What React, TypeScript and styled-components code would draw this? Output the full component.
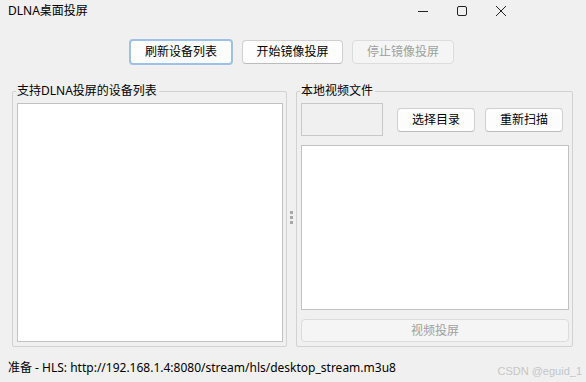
import React from 'react';
import styled, { createGlobalStyle } from 'styled-components';

const FONT = `"Noto Sans", "Noto Sans CJK SC", sans-serif`;

const GlobalStyle = createGlobalStyle`
    html, body {
        margin: 0;
        padding: 0;
        background: #f0f0f0;
    }
    * {
        box-sizing: border-box;
    }
`;

const Window = styled.div`
    width: 586px;
    height: 382px;
    display: flex;
    flex-direction: column;
    background: #f0f0f0;
    font-family: ${FONT};
    font-size: 12px;
    color: #000;
    position: relative;
    overflow: hidden;
`;

const TitleBar = styled.div`
    height: 21px;
    display: flex;
    align-items: center;
    padding-left: 8px;
`;

const Title = styled.div`
    flex: 1;
    line-height: 14px;
`;

const Controls = styled.div`
    display: flex;
    margin-right: 66px;
    height: 21px;
`;

const ControlButton = styled.div`
    width: 39px;
    height: 21px;
    display: flex;
    align-items: center;
    justify-content: center;
`;

const Toolbar = styled.div`
    display: flex;
    gap: 9px;
    padding-top: 18px;
    padding-left: 129px;
`;

const Button = styled.button<{ $focused?: boolean; $width?: number }>`
    font-family: ${FONT};
    font-size: 12px;
    height: ${(p) => (p.$focused ? 26 : 24)}px;
    width: ${(p) => p.$width ?? 100}px;
    margin: ${(p) => (p.$focused ? '0' : '1px 0')};
    padding: 0;
    border-radius: 4px;
    background: #fdfdfd;
    color: #000;
    border: ${(p) => (p.$focused ? '2px solid #9cc2ea' : '1px solid #d0d0d0')};
    border-bottom-color: ${(p) => (p.$focused ? '#9cc2ea' : '#bcbcbc')};
    line-height: 14px;

    &:disabled {
        background: #f5f5f5;
        color: #a0a0a0;
        border-color: #dcdcdc;
    }
`;

const Main = styled.div`
    display: flex;
    margin-top: 19px;
    height: 263px;
    padding-left: 12px;
`;

const Group = styled.fieldset<{ $width: number }>`
    width: ${(p) => p.$width}px;
    min-width: 0;
    margin: 0;
    padding: 5px 3px 4px 4px;
    border: 1px solid #d2d2d2;
    border-radius: 2px;
    display: flex;
    flex-direction: column;
`;

const Legend = styled.legend`
    padding: 0 2px 0 1px;
    margin-left: -1px;
    line-height: 14px;
    font-size: 12px;
`;

const ListBox = styled.div`
    flex: 1;
    background: #fff;
    border: 1px solid #c2c2c2;
`;

const Splitter = styled.div`
    width: 9px;
    display: flex;
    flex-direction: column;
    align-items: center;
    justify-content: center;
    gap: 2px;
    padding-top: 4px;
`;

const Dot = styled.div`
    width: 3px;
    height: 3px;
    background: #a8a8a8;
`;

const FileRow = styled.div`
    display: flex;
    align-items: center;
    height: 33px;
    margin-right: 5px;
`;

const PathBox = styled.div`
    width: 82px;
    height: 33px;
    border: 1px solid #c8c8c8;
`;

const RowButtons = styled.div`
    display: flex;
    gap: 10px;
    margin-left: 14px;
`;

const FileList = styled(ListBox)`
    margin: 9px 0;
`;

const WideButton = styled(Button)`
    width: 100%;
    height: 23px;
    margin: 0;
`;

const StatusBar = styled.div`
    flex: 1;
    padding: 14px 0 0 8px;
    line-height: 14px;
`;

const Watermark = styled.div`
    position: absolute;
    right: 4px;
    bottom: 5px;
    font-family: "Liberation Sans", Arial, sans-serif;
    font-size: 11px;
    color: #c6c6c6;
`;

export default function App() {
    return (
        <Window>
            <GlobalStyle />
            <TitleBar>
                <Title>DLNA桌面投屏</Title>
                <Controls>
                    <ControlButton>
                        <svg width="12" height="12" viewBox="0 0 12 12">
                            <line x1="1" y1="6.5" x2="11" y2="6.5" stroke="#222" strokeWidth="1" />
                        </svg>
                    </ControlButton>
                    <ControlButton>
                        <svg width="12" height="12" viewBox="0 0 12 12">
                            <rect x="1.5" y="1.5" width="9" height="9" rx="1.5" fill="none" stroke="#222" strokeWidth="1" />
                        </svg>
                    </ControlButton>
                    <ControlButton>
                        <svg width="12" height="12" viewBox="0 0 12 12">
                            <path d="M1 1 L11 11 M11 1 L1 11" stroke="#222" strokeWidth="1" />
                        </svg>
                    </ControlButton>
                </Controls>
            </TitleBar>

            <Toolbar>
                <Button $focused $width={104}>刷新设备列表</Button>
                <Button $width={101}>开始镜像投屏</Button>
                <Button $width={102} disabled>停止镜像投屏</Button>
            </Toolbar>

            <Main>
                <Group $width={275}>
                    <Legend>支持DLNA投屏的设备列表</Legend>
                    <ListBox />
                </Group>
                <Splitter>
                    <Dot />
                    <Dot />
                    <Dot />
                </Splitter>
                <Group $width={277}>
                    <Legend>本地视频文件</Legend>
                    <FileRow>
                        <PathBox />
                        <RowButtons>
                            <Button $width={78}>选择目录</Button>
                            <Button $width={78}>重新扫描</Button>
                        </RowButtons>
                    </FileRow>
                    <FileList />
                    <WideButton disabled>视频投屏</WideButton>
                </Group>
            </Main>

            <StatusBar>准备 - HLS: http://192.168.1.4:8080/stream/hls/desktop_stream.m3u8</StatusBar>
            <Watermark>CSDN @eguid_1</Watermark>
        </Window>
    );
}
